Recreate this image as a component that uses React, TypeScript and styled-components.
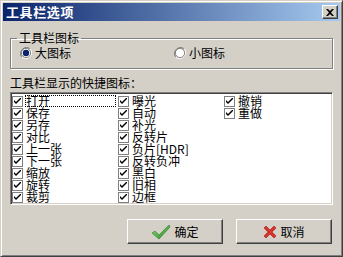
import React, { useState } from 'react';
import styled, { createGlobalStyle } from 'styled-components';

const GlobalStyle = createGlobalStyle`
	html, body {
		margin: 0;
		padding: 0;
		background: #d4d0c8;
		overflow: hidden;
	}
	* {
		box-sizing: border-box;
	}
`;

const items: string[] = [
	'打开',
	'保存',
	'另存',
	'对比',
	'上一张',
	'下一张',
	'缩放',
	'旋转',
	'裁剪',
	'曝光',
	'自动',
	'补光',
	'反转片',
	'负片[HDR]',
	'反转负冲',
	'黑白',
	'旧相',
	'边框',
	'撤销',
	'重做',
];

const CheckMark: React.FunctionComponent = () => (
	<svg width="7" height="7" viewBox="0 0 7 7">
		<path d="M0 2 L0 4 L2 6 L7 1 L7 -1 L2 4 Z" fill="#000" />
	</svg>
);

const OkIcon: React.FunctionComponent = () => (
	<svg width="20" height="16" viewBox="0 0 20 16">
		<defs>
			<linearGradient id="ok" x1="0" y1="0" x2="1" y2="1">
				<stop offset="0" stopColor="#8fdc7a" />
				<stop offset="1" stopColor="#1f8a1f" />
			</linearGradient>
		</defs>
		<path d="M1 9 L4 7 L8 11 L18 1 L19 3 L8 15 Z" fill="url(#ok)" stroke="#2f7a2a" strokeWidth="0.6" />
	</svg>
);

const CancelIcon: React.FunctionComponent = () => (
	<svg width="14" height="14" viewBox="0 0 14 14">
		<path
			d="M1 3 L3 1 L7 5 L11 1 L13 3 L9 7 L13 11 L11 13 L7 9 L3 13 L1 11 L5 7 Z"
			fill="#d8322a"
			stroke="#a01810"
			strokeWidth="0.6"
		/>
	</svg>
);

const App: React.FunctionComponent = () => {
	const [big, setBig] = useState<boolean>(true);

	return (
		<>
			<GlobalStyle />
			<Window>
				<TitleBar>
					<Title>工具栏选项</Title>
					<CloseButton>
						<svg width="8" height="7" viewBox="0 0 8 7">
							<path d="M0 0 L2 0 L4 2 L6 0 L8 0 L5 3.5 L8 7 L6 7 L4 5 L2 7 L0 7 L3 3.5 Z" fill="#000" />
						</svg>
					</CloseButton>
				</TitleBar>
				<Body>
					<GroupBox>
						<Legend>工具栏图标</Legend>
						<RadioRow>
							<RadioItem onClick={() => setBig(true)}>
								<Radio checked={big} />
								<span>大图标</span>
							</RadioItem>
							<RadioItem onClick={() => setBig(false)}>
								<Radio checked={!big} />
								<span>小图标</span>
							</RadioItem>
						</RadioRow>
					</GroupBox>
					<Caption>工具栏显示的快捷图标：</Caption>
					<ListBox>
						{items.map((name, i) => (
							<ListItem key={name}>
								<CheckBox>
									<CheckMark />
								</CheckBox>
								<ItemLabel $focused={i === 0}>{name}</ItemLabel>
							</ListItem>
						))}
					</ListBox>
					<ButtonRow>
						<Button>
							<OkIcon />
							<span>确定</span>
						</Button>
						<Button>
							<CancelIcon />
							<span>取消</span>
						</Button>
					</ButtonRow>
				</Body>
			</Window>
		</>
	);
};

const Radio: React.FunctionComponent<{ checked: boolean }> = ({ checked }) => (
	<svg width="12" height="12" viewBox="0 0 12 12">
		<path d="M10.2 1.8 A6 6 0 0 0 1.8 10.2" fill="none" stroke="#808080" />
		<path d="M1.8 10.2 A6 6 0 0 0 10.2 1.8" fill="none" stroke="#ffffff" />
		<circle cx="6" cy="6" r="4.6" fill="#fff" stroke="#404040" strokeWidth="0.6" />
		{checked && <circle cx="6" cy="6" r="3.2" fill="#0a246a" />}
	</svg>
);

const Window = styled.div`
	display: flex;
	flex-direction: column;
	width: 343px;
	height: 257px;
	padding: 1px;
	background: #d4d0c8;
	border: 1px solid;
	border-color: #d4d0c8 #404040 #404040 #d4d0c8;
	box-shadow: inset 1px 1px 0 #ffffff, inset -1px -1px 0 #808080;
	font-family: 'Noto Sans CJK SC', 'DejaVu Sans', sans-serif;
	font-size: 12px;
	color: #000;
`;

const TitleBar = styled.div`
	display: flex;
	align-items: center;
	justify-content: space-between;
	height: 18px;
	margin: 1px 1px 0 1px;
	padding: 0 2px 0 3px;
	background: linear-gradient(to right, #0a246a, #a6caf0);
`;

const Title = styled.span`
	color: #fff;
	font-weight: 700;
	font-size: 13px;
	line-height: 14px;
	letter-spacing: 0.6px;
`;

const CloseButton = styled.div`
	display: flex;
	align-items: center;
	justify-content: center;
	width: 16px;
	height: 14px;
	background: #d4d0c8;
	border: 1px solid;
	border-color: #ffffff #404040 #404040 #ffffff;
	box-shadow: inset -1px -1px 0 #808080;
`;

const Body = styled.div`
	display: flex;
	flex-direction: column;
	padding: 0 8px 0 8px;
`;

const GroupBox = styled.fieldset`
	margin: 10px 0 0 0;
	padding: 1px 9px 8px 9px;
	min-width: 0;
	border: 1px solid #808080;
	box-shadow: 1px 1px 0 #ffffff, inset 1px 1px 0 #ffffff;
`;

const Legend = styled.legend`
	margin-left: -3px;
	padding: 0 2px;
	line-height: 14px;
	font-size: 12px;
`;

const RadioRow = styled.div`
	display: grid;
	grid-template-columns: 154px 1fr;
	height: 14px;
	align-items: center;
`;

const RadioItem = styled.label`
	display: flex;
	align-items: center;
	gap: 3px;
	line-height: 14px;
	cursor: default;
`;

const Caption = styled.div`
	margin-top: 7px;
	line-height: 14px;
`;

const ListBox = styled.div`
	display: grid;
	grid-template-columns: 106px 106px 1fr;
	grid-template-rows: repeat(9, 12px);
	grid-auto-flow: column;
	height: 113px;
	margin-top: 2px;
	padding: 2px 0 0 1px;
	background: #fff;
	border: 1px solid;
	border-color: #808080 #ffffff #ffffff #808080;
	box-shadow: inset 1px 1px 0 #404040, inset -1px -1px 0 #d4d0c8;
`;

const ListItem = styled.div`
	display: flex;
	align-items: center;
	height: 12px;
	gap: 2px;
`;

const CheckBox = styled.span`
	display: flex;
	align-items: center;
	justify-content: center;
	flex: none;
	width: 11px;
	height: 11px;
	background: #fff;
	border: 1px solid #808080;
`;

const ItemLabel = styled.span<{ $focused: boolean }>`
	flex: ${props => (props.$focused ? '0 0 91px' : '0 1 auto')};
	height: 12px;
	padding-left: 1px;
	line-height: 12px;
	white-space: nowrap;
	outline: ${props => (props.$focused ? '1px dotted #000' : 'none')};
	outline-offset: -1px;
`;

const ButtonRow = styled.div`
	display: flex;
	justify-content: flex-end;
	gap: 13px;
	margin-top: 14px;
	padding-right: 1px;
`;

const Button = styled.div`
	display: flex;
	align-items: center;
	justify-content: center;
	gap: 3px;
	width: 96px;
	height: 25px;
	background: #d4d0c8;
	border: 1px solid;
	border-color: #ffffff #404040 #404040 #ffffff;
	box-shadow: inset -1px -1px 0 #808080;
	line-height: 14px;
`;

export default App;
